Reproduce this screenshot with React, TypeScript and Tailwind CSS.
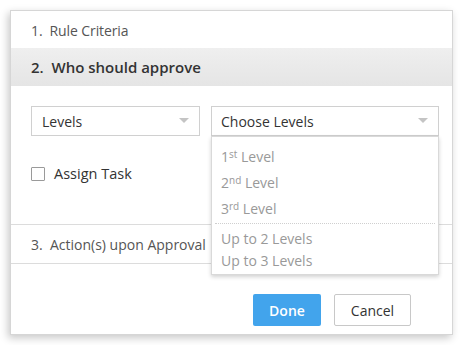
import React from 'react';

const font = { fontFamily: '"Open Sans", "Liberation Sans", sans-serif' };

function Caret() {
  return (
    <svg width="10" height="6" viewBox="0 0 10 6" className="shrink-0">
      <path d="M0 0 L10 0 L5 5 Z" fill="#c4c4c4" />
    </svg>
  );
}

const levelOptions = [
  { n: '1', sup: 'st' },
  { n: '2', sup: 'nd' },
  { n: '3', sup: 'rd' },
];

export default function App() {
  return (
    <div className="w-[463px] h-[345px] bg-white overflow-hidden" style={font}>
      <div className="ml-[10px] mt-[10px] w-[443px] h-[325px] bg-white border border-[#d6d6d6] shadow-[-2px_3px_8px_rgba(0,0,0,0.22)] flex flex-col text-[#333]">
        {/* Step 1 */}
        <div className="h-[37px] flex items-center pl-[20px] pt-[2px] text-[14px] text-[#555] tracking-[-0.1px]">
          1.&nbsp;&nbsp;Rule Criteria
        </div>

        {/* Step 2 header */}
        <div className="h-[38px] flex items-center pl-[20px] bg-gradient-to-b from-[#efefef] to-[#e5e5e5] text-[15px] font-semibold text-[#333]">
          2.&nbsp;&nbsp;Who should approve
        </div>

        {/* Step 2 body */}
        <div className="relative h-[139px] border-b border-[#dcdcdc]">
          <div className="flex gap-[11px] pl-[20px] pt-[20px]">
            <div className="w-[169px] h-[30px] border border-[#d0d0d0] flex items-center justify-between pl-[10px] pr-[10px] text-[14px] text-[#333]">
              <span>Levels</span>
              <Caret />
            </div>
            <div className="relative w-[228px] h-[30px] border border-[#d0d0d0] flex items-center justify-between pl-[9px] pr-[10px] text-[14px] text-[#333]">
              <span>Choose Levels</span>
              <Caret />

              {/* open dropdown */}
              <div className="absolute left-[-1px] top-[29px] w-[228px] h-[139px] bg-white border border-[#d9d9d9] shadow-[0_2px_4px_rgba(0,0,0,0.18)] z-10 text-[14px] text-[#999]">
                <div className="pt-[6px] pl-[9px] flex flex-col">
                  {levelOptions.map((o) => (
                    <div key={o.n} className="h-[26px] flex items-center">
                      {o.n}
                      <sup className="text-[10px] relative top-[-2px]">{o.sup}</sup>
                      &nbsp;Level
                    </div>
                  ))}
                </div>
                <div className="mx-[3px] mt-[2px] border-t border-dotted border-[#cfcfcf]" />
                <div className="pl-[9px] pt-[3px] flex flex-col">
                  <div className="h-[22px] flex items-center">Up to 2 Levels</div>
                  <div className="h-[22px] flex items-center">Up to 3 Levels</div>
                </div>
              </div>
            </div>
          </div>

          <div className="flex items-center gap-[9px] pl-[20px] mt-[27px]">
            <div className="w-[14px] h-[14px] border border-[#9a9a9a] rounded-[1px] bg-white" />
            <span className="text-[14.5px] text-[#333]">Assign Task</span>
          </div>
        </div>

        {/* Step 3 */}
        <div className="h-[39px] flex items-center pl-[20px] text-[14px] text-[#555] border-b border-[#dcdcdc]">
          3.&nbsp;&nbsp;Action(s) upon Approval
        </div>

        <div className="flex-1" />

        {/* footer */}
        <div className="flex justify-end gap-[13px] pr-[41px] pb-[8px]">
          <button className="w-[68px] h-[32px] bg-[#42a4ec] rounded-[2px] text-white text-[14px] font-semibold">
            Done
          </button>
          <button className="w-[77px] h-[32px] bg-white border border-[#c8c8c8] rounded-[2px] text-[#333] text-[14px]">
            Cancel
          </button>
        </div>
      </div>
    </div>
  );
}
